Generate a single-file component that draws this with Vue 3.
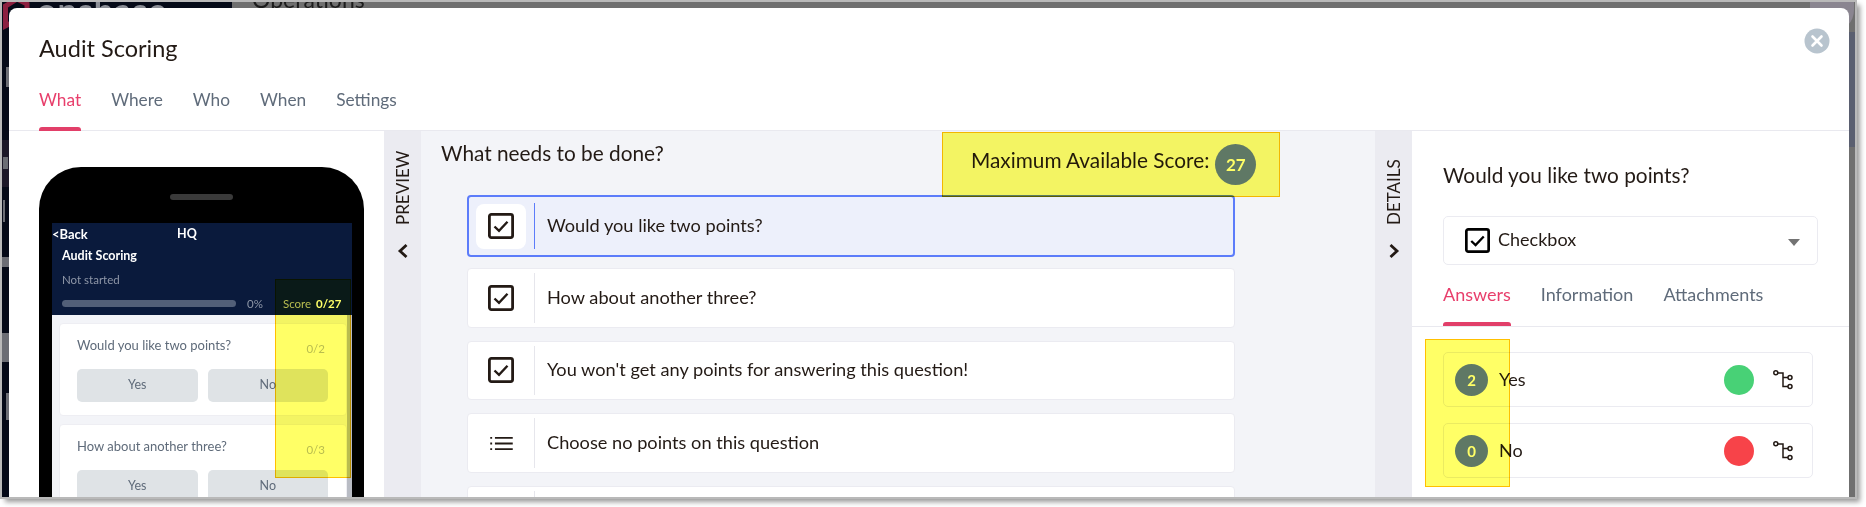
<script setup>
const tabs = ['What', 'Where', 'Who', 'When', 'Settings']
const detailTabs = ['Answers', 'Information', 'Attachments']
const questions = [
  { text: 'Would you like two points?', icon: 'check', active: true },
  { text: 'How about another three?', icon: 'check' },
  { text: "You won't get any points for answering this question!", icon: 'check' },
  { text: 'Choose no points on this question', icon: 'list' },
  { text: '', icon: '' },
]
const answers = [
  { score: 2, label: 'Yes', color: '#48d176' },
  { score: 0, label: 'No', color: '#f74349' },
]
const phoneCards = [
  { text: 'Would you like two points?', score: '0/2' },
  { text: 'How about another three?', score: '0/3' },
]
</script>

<template>
  <div class="shot">
    <div class="backdrop">
      <div class="backdrop-top">
        <div class="brand"><span class="brand-name">opsbase</span></div>
        <div class="page-name">Operations</div>
      </div>
      <!-- bits of the page behind the modal -->
      <svg class="brand-mark" viewBox="0 0 30 30">
        <path d="M15 -3L25 2 25 8 15 18 3.500 24V4Z" fill="none" stroke="#8c2040" stroke-width="5" />
      </svg>
      <span class="avatar"></span>
      <span class="right-top"></span>
      <span class="side side-a"></span>
      <span class="side side-b"></span>
      <span class="side side-c"></span>
      <span class="side side-d"></span>
      <span class="side side-e"></span>
      <span class="side side-f"></span>
      <span class="side side-g"></span>

      <div class="modal">
        <header class="modal-head">
          <h1>Audit Scoring</h1>
          <nav class="tabs">
            <span v-for="(t, i) in tabs" :key="t" class="tab" :class="{ on: i === 0 }">{{ t }}</span>
          </nav>
          <svg class="close" viewBox="0 0 26 26">
            <circle cx="13" cy="13" r="12.500" fill="#b8c4ce" />
            <path d="M8.500 8.500l9 9M17.500 8.500l-9 9" stroke="#fff" stroke-width="2.600" stroke-linecap="round" />
          </svg>
        </header>

        <div class="body">
          <section class="preview">
            <div class="phone">
              <div class="speaker"></div>
              <div class="screen">
                <div class="screen-head">
                  <div class="nav-row"><span class="back">&lt;Back</span><span class="hq">HQ</span></div>
                  <div class="audit-name">Audit Scoring</div>
                  <div class="status">Not started</div>
                  <div class="progress-row">
                    <div class="progress"></div>
                    <span class="pct">0%</span>
                    <span class="score">Score <b>0/27</b></span>
                  </div>
                </div>
                <div class="screen-body">
                  <div v-for="c in phoneCards" :key="c.text" class="p-card">
                    <div class="p-q"><span>{{ c.text }}</span><span class="p-score">{{ c.score }}</span></div>
                    <div class="p-btns"><span>Yes</span><span>No</span></div>
                  </div>
                </div>
              </div>
            </div>
          </section>

          <aside class="strip">
            <span class="strip-label">PREVIEW</span>
            <svg class="chev" viewBox="0 0 12 16"><path d="M9.500 2L3 8l6.500 6" /></svg>
          </aside>

          <section class="center">
            <h2>What needs to be done?</h2>
            <div class="max-score"><span class="max-text">Maximum Available Score:</span><span class="max-num">27</span></div>
            <div class="q-list">
              <div v-for="(q, i) in questions" :key="i" class="q-row" :class="{ active: q.active }">
                <div class="q-icon">
                  <svg v-if="q.icon === 'check'" viewBox="0 0 26 26" class="check-ic">
                    <rect x="1.400" y="1.400" width="23.200" height="23.200" rx="2" fill="none" stroke="#231a15" stroke-width="2.800" />
                    <path d="M6.500 13.500l4.500 4.300 8.500-9" fill="none" stroke="#231a15" stroke-width="2.400" />
                  </svg>
                  <svg v-else-if="q.icon === 'list'" viewBox="0 0 24 16" class="list-ic">
                    <path d="M5 2h19M5 8h19M5 14h19" stroke="#231a15" stroke-width="2" />
                    <path d="M0 2h2M0 8h2M0 14h2" stroke="#231a15" stroke-width="2" />
                  </svg>
                </div>
                <div class="q-text">{{ q.text }}</div>
              </div>
            </div>
          </section>

          <aside class="strip">
            <span class="strip-label">DETAILS</span>
            <svg class="chev" viewBox="0 0 12 16"><path d="M2.500 2L9 8l-6.500 6" /></svg>
          </aside>

          <section class="details">
            <div class="d-top">
              <h2>Would you like two points?</h2>
              <div class="select">
                <svg viewBox="0 0 26 26" class="check-sel">
                  <rect x="1.400" y="1.400" width="23.200" height="23.200" rx="2" fill="#fff" stroke="#000" stroke-width="2.800" />
                  <path d="M6.500 13.500l4.500 4.300 8.500-9" fill="none" stroke="#000" stroke-width="2.400" />
                </svg>
                <span class="select-text">Checkbox</span>
                <i class="caret"></i>
              </div>
              <nav class="d-tabs">
                <span v-for="(t, i) in detailTabs" :key="t" class="tab" :class="{ on: i === 0 }">{{ t }}</span>
              </nav>
            </div>
            <div class="answers">
              <div v-for="a in answers" :key="a.label" class="answer">
                <span class="a-score">{{ a.score }}</span>
                <span class="a-label">{{ a.label }}</span>
                <span class="a-dot" :style="{ background: a.color }"></span>
                <svg class="branch" viewBox="0 0 20 20">
                  <g fill="none" stroke="#231a15" stroke-width="1.500">
                    <circle cx="2.800" cy="2.800" r="2" />
                    <circle cx="17" cy="7.500" r="2" />
                    <circle cx="17" cy="16.500" r="2" />
                    <path d="M4.800 3H10V16.500H15M10 7.500H15" />
                  </g>
                </svg>
              </div>
            </div>
          </section>
        </div>

        <!-- highlighter boxes drawn over the screenshot -->
        <div class="mark mark-phone"></div>
        <div class="mark mark-max"></div>
        <div class="mark mark-answers"></div>
      </div>
    </div>
  </div>
</template>

<style scoped>
.shot {
  width: 1866px;
  height: 507px;
  background: #fff;
  padding: 2px 11px 10px 2px;
  box-sizing: border-box;
  overflow: hidden;
  font-family: 'Lato', 'Open Sans', sans-serif;
  color: #231a15;
}
.backdrop {
  position: relative;
  width: 1853px;
  height: 495px;
  background: linear-gradient(90deg, #050a18 0, #050a18 230px, #6f6f6f 230px);
  box-shadow: 0 0 0 2px #b9b9b9, 4px 4px 5px 1px rgba(0, 0, 0, 0.4);
  display: flex;
  flex-direction: column;
}
.backdrop-top {
  height: 6px;
  overflow: hidden;
  display: flex;
  flex: none;
}
.brand {
  width: 230px;
  flex: none;
  padding-left: 35px;
  box-sizing: border-box;
}
.brand-name {
  display: block;
  margin-top: -9px;
  font-size: 34px;
  line-height: 33px;
  font-weight: 700;
  color: #8c8f97;
  letter-spacing: 1px;
}
.brand-mark {
  position: absolute;
  left: 0;
  top: 0;
  width: 30px;
  height: 30px;
}
.avatar {
  position: absolute;
  left: 1808px;
  top: 0;
  width: 44px;
  height: 30px;
  background: #8a8590;
  border-radius: 0 0 22px 22px;
}
.right-top {
  position: absolute;
  right: 0;
  top: 30px;
  width: 7px;
  height: 115px;
  background: #5a5f70;
}
.side {
  position: absolute;
  left: 0;
  width: 7px;
  background: #6b6d74;
}
.side-a {
  top: 65px;
  height: 20px;
  width: 3px;
  left: 4px;
}
.side-b {
  top: 138px;
  height: 47px;
  background: #1c1828;
}
.side-c {
  top: 155px;
  height: 12px;
  left: 1px;
  width: 5px;
}
.side-d {
  top: 198px;
  height: 22px;
  left: 1px;
  width: 2px;
}
.side-e {
  top: 255px;
  height: 10px;
}
.side-f {
  top: 331px;
  height: 29px;
}
.side-g {
  top: 391px;
  height: 27px;
  width: 3px;
  left: 4px;
}
.page-name {
  margin: -17px 0 0 20px;
  font-size: 23px;
  color: #1c1c1c;
}
.modal {
  flex: 1;
  min-height: 0;
  margin: 0 6px 0 7px;
  background: #fff;
  border-radius: 8px 8px 0 0;
  overflow: hidden;
  position: relative;
  display: flex;
  flex-direction: column;
}
.modal-head {
  flex: none;
  height: 123px;
  box-sizing: border-box;
  padding: 25px 30px 0;
  border-bottom: 1px solid #e9e9ef;
  position: relative;
}
h1 {
  margin: 0;
  font-size: 23.500px;
  line-height: 30px;
  font-weight: 400;
}
.tabs {
  display: flex;
  gap: 30px;
  margin-top: 25px;
}
.tabs .tab {
  font-size: 17.300px;
}
.tab {
  font-size: 18px;
  line-height: 24px;
  color: #5f6b7a;
  position: relative;
  display: block;
}
.tab.on {
  color: #e83e6b;
}
.tab.on::after {
  content: '';
  position: absolute;
  left: 0;
  right: 0;
  top: 39px;
  height: 4px;
  background: #e23f69;
  border-radius: 3px 3px 0 0;
}
.d-tabs .tab.on::after {
  top: 40px;
}
.close {
  position: absolute;
  top: 20px;
  right: 19px;
  width: 26px;
  height: 26px;
}
.body {
  flex: 1;
  min-height: 0;
  display: flex;
}
.preview {
  width: 375px;
  flex: none;
  box-sizing: border-box;
  padding: 36px 20px 0 30px;
  background: #fff;
}
.phone {
  width: 325px;
  height: 400px;
  background: #000;
  border-radius: 42px 42px 0 0;
  padding-top: 27px;
  box-sizing: border-box;
}
.speaker {
  width: 63px;
  height: 6px;
  margin: 0 auto;
  background: #3a3a3a;
  border-radius: 3px;
}
.screen {
  width: 300px;
  margin: 23px 0 0 13px;
}
.screen-head {
  height: 92px;
  background: #0a1a3c;
  color: #fff;
  font-size: 11.500px;
}
.nav-row {
  display: flex;
  height: 21px;
  align-items: center;
  font-weight: 700;
  font-size: 13px;
}
.back {
  width: 125px;
}
.hq {
  font-size: 12.500px;
}
.audit-name {
  padding-left: 10px;
  margin-top: 1px;
  font-size: 12.500px;
  font-weight: 700;
  line-height: 22px;
}
.status {
  padding-left: 10px;
  margin-top: 1px;
  line-height: 23px;
  color: #8f97a8;
}
.progress-row {
  display: flex;
  align-items: center;
  padding-left: 10px;
  margin-top: 1px;
  height: 22px;
}
.progress {
  width: 174px;
  height: 7px;
  background: #525f78;
  border-radius: 4px;
}
.pct {
  margin-left: 11px;
  width: 36px;
  color: #8f97a8;
}
.score {
  color: #b8bdc6;
}
.score b {
  color: #fff;
  margin-left: 2px;
}
.screen-body {
  background: #f3f4f8;
  padding: 8px 0 0 7px;
  height: 200px;
  border-right: 5px solid #b9bcc4;
  box-sizing: border-box;
  width: 300px;
}
.p-card {
  width: 288px;
  height: 93px;
  background: #fff;
  border: 1px solid #eeeef3;
  border-radius: 4px;
  box-sizing: border-box;
  padding: 12px 18px 0 17px;
  margin-bottom: 8px;
}
.p-q {
  display: flex;
  justify-content: space-between;
  font-size: 13px;
  color: #5f6b7a;
  line-height: 18px;
}
.p-score {
  color: #b9bdc2;
  font-size: 11.500px;
  margin: 4px 3px 0 0;
}
.p-btns {
  display: flex;
  gap: 10px;
  margin-top: 11px;
}
.p-btns span {
  flex: 1;
  height: 33px;
  line-height: 32px;
  background: #dfe3e6;
  border-radius: 5px;
  text-align: center;
  font-size: 12.500px;
  color: #5f6b7a;
}
.strip {
  width: 37px;
  flex: none;
  background: #ebebf1;
  box-sizing: border-box;
  padding-top: 19px;
  display: flex;
  flex-direction: column;
  align-items: center;
  height: 100%;
}
.strip-label {
  writing-mode: vertical-rl;
  transform: rotate(180deg);
  font-size: 17px;
  line-height: 18px;
  height: 75px;
  text-align: left;
}
.chev {
  width: 12px;
  height: 16px;
  margin-top: 18px;
}
.chev path {
  fill: none;
  stroke: #231a15;
  stroke-width: 2.800;
}
.center {
  width: 954px;
  flex: none;
  box-sizing: border-box;
  background: #f3f4f8;
  padding: 9px 20px 0;
  position: relative;
}
h2 {
  margin: 0;
  font-size: 20.800px;
  line-height: 26px;
  font-weight: 400;
}
.max-score {
  position: absolute;
  top: 13px;
  left: 550px;
  display: flex;
  align-items: flex-start;
  gap: 6px;
  white-space: nowrap;
}
.max-text {
  margin-top: 3px;
  font-size: 20.800px;
  line-height: 26px;
}
.max-num {
  width: 41px;
  height: 41px;
  border-radius: 50%;
  background: #5f78fb;
  color: #fff;
  font-size: 17px;
  font-weight: 700;
  text-align: center;
  line-height: 41px;
}
.q-list {
  margin: 29px 0 0 26px;
  width: 768px;
  display: flex;
  flex-direction: column;
  gap: 13px;
}
.q-row {
  height: 59.670px;
  background: #fff;
  border: 1px solid #ebebf1;
  border-radius: 4px;
  display: flex;
  align-items: center;
  padding: 4px 0;
  box-sizing: border-box;
  flex: none;
}
.q-row.active {
  background: #edf0fb;
  border: 2px solid #5c7cfa;
  height: 62px;
  margin-bottom: -2px;
  padding: 6px 0 6px 7px;
}
.q-icon {
  width: 50px;
  height: 45px;
  margin-left: 8px;
  display: flex;
  align-items: center;
  justify-content: center;
  flex: none;
  border-radius: 8px;
}
.active .q-icon {
  background: #fff;
  margin-left: 0;
}
.check-ic {
  width: 26px;
  height: 26px;
}
.list-ic {
  width: 23px;
  height: 15px;
}
.q-text {
  align-self: stretch;
  flex: 1;
  margin-left: 8px;
  padding: 0 0 2px 12px;
  border-left: 1px solid #e6e6ec;
  display: flex;
  align-items: center;
  font-size: 18.200px;
}
.active .q-text {
  border-left-color: #5c7cfa;
}
.details {
  flex: 1;
  min-width: 0;
  background: #fff;
}
.d-top {
  height: 196px;
  box-sizing: border-box;
  padding: 31px 31px 0;
  border-bottom: 1px solid #e9e9ef;
}
.select {
  margin-top: 28px;
  width: 375px;
  height: 49px;
  box-sizing: border-box;
  border: 1px solid #ebebf1;
  border-radius: 5px;
  display: flex;
  align-items: center;
  padding-left: 21px;
  font-size: 18px;
  position: relative;
}
.select-text {
  margin-top: -3px;
}
.check-sel {
  width: 25px;
  height: 25px;
  margin-right: 8px;
}
.caret {
  position: absolute;
  right: 17px;
  top: 22px;
  border-left: 6px solid transparent;
  border-right: 6px solid transparent;
  border-top: 7px solid #737373;
}
.d-tabs {
  display: flex;
  gap: 30px;
  margin-top: 17px;
}
.answers {
  padding: 25px 0 0 31px;
  display: flex;
  flex-direction: column;
  gap: 16px;
}
.answer {
  width: 370px;
  height: 55px;
  box-sizing: border-box;
  border: 1px solid #ebebf1;
  border-radius: 5px;
  display: flex;
  align-items: center;
  padding: 0 19px 0 11px;
}
.a-score {
  width: 33px;
  height: 32px;
  border-radius: 50%;
  background: #5f78fb;
  color: #fff;
  font-size: 15px;
  font-weight: 700;
  line-height: 32px;
  text-align: center;
  flex: none;
}
.a-label {
  margin: -2px 0 0 11px;
  font-size: 18px;
  flex: 1;
}
.a-dot {
  width: 30px;
  height: 30px;
  border-radius: 50%;
  flex: none;
}
.branch {
  width: 20px;
  height: 20px;
  margin-left: 19px;
  flex: none;
}
.mark {
  position: absolute;
  background: #ffff66;
  border: 1px solid #ffc000;
  mix-blend-mode: multiply;
  box-sizing: border-box;
}
.mark-phone {
  left: 266px;
  top: 271px;
  width: 76px;
  height: 199px;
}
.mark-max {
  left: 933px;
  top: 124px;
  width: 338px;
  height: 65px;
}
.mark-answers {
  left: 1416px;
  top: 331px;
  width: 85px;
  height: 148px;
}
</style>

<style>
html,
body {
  margin: 0;
  background: #fff;
}
</style>
